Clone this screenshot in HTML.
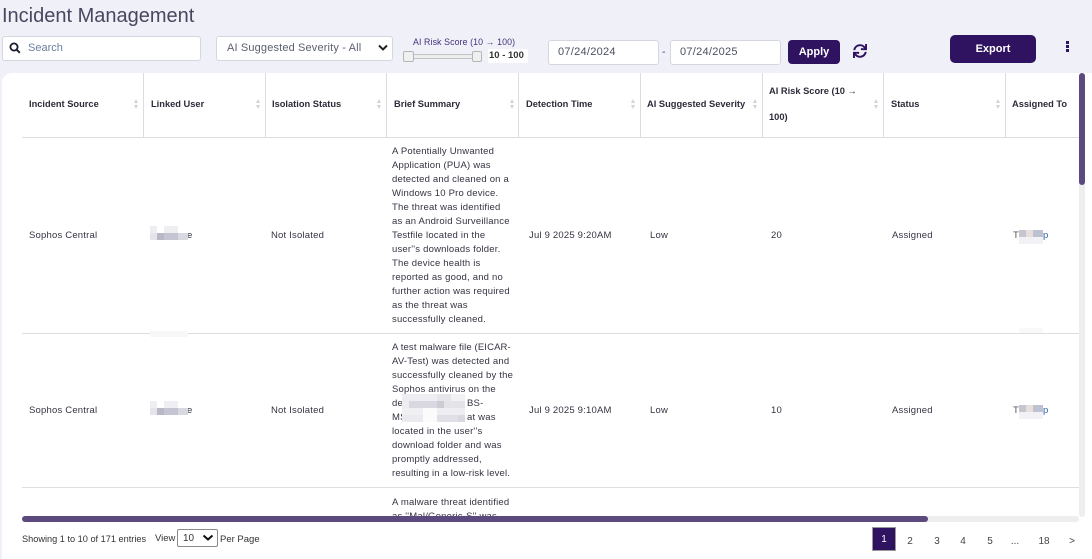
<!DOCTYPE html>
<html lang="en"><head><meta charset="utf-8"><title>Incident Management</title>
<style>
*{box-sizing:border-box}
html,body{margin:0;padding:0}
body{width:1092px;height:559px;overflow:hidden;position:relative;background:#f0f1f8;font-family:"Liberation Sans",sans-serif;color:#343442;font-size:9.5px}
.a{position:absolute;white-space:nowrap}
.t{position:absolute;white-space:nowrap;line-height:14px;letter-spacing:.2px;font-size:9.5px}
.box{position:absolute;background:#fff;border:1px solid #d5d7e0;border-radius:3px}
.btn{position:absolute;background:#2f1260;color:#fff;font-weight:bold;border-radius:5px;text-align:center}
.h{position:absolute;white-space:nowrap;font-weight:bold;font-size:9.3px;line-height:14px;color:#2c2c3a;top:97px}
.v{position:absolute;top:73px;height:64px;width:1px;background:#dcdcdf}
.r{position:absolute;left:22px;width:1057px;height:1px;background:#dedee0}
.up,.dn{position:absolute;width:0;height:0;border-left:2.5px solid transparent;border-right:2.5px solid transparent}
.up{border-bottom:4px solid #d3d3d6}.dn{border-top:4px solid #d3d3d6}
.p{position:absolute}
.pg{position:absolute;top:535px;font-size:10px;line-height:14px;color:#444;width:20px;text-align:center}
</style></head><body>
<div class="a" style="left:2px;top:4px;font-size:20px;line-height:24px;color:#4a4660">Incident Management</div>

<div class="box" style="left:2px;top:36px;width:199px;height:25px"></div>
<svg class="p" style="left:9px;top:42px" width="12" height="12" viewBox="0 0 12 12"><circle cx="5" cy="5" r="3.6" fill="none" stroke="#1c1c2c" stroke-width="1.8"/><path d="M7.8 7.8L10.8 10.8" stroke="#1c1c2c" stroke-width="2"/></svg>
<div class="a" style="left:28px;top:41px;font-size:11px;line-height:14px;color:#6a7fa0">Search</div>

<div class="box" style="left:216px;top:36px;width:177px;height:25px"></div>
<div class="a" style="left:227px;top:41px;font-size:11px;line-height:14px;color:#5c6070;letter-spacing:.15px">AI Suggested Severity - All</div>
<svg class="p" style="left:378px;top:44px" width="10" height="8" viewBox="0 0 10 8"><path d="M1 1.5L5 5.5L9 1.5" fill="none" stroke="#222" stroke-width="2"/></svg>

<div class="a" style="left:413px;top:37px;font-size:8.8px;line-height:11px;color:#44307c;letter-spacing:.1px">AI Risk Score (10 → 100)</div>
<div class="p" style="left:408px;top:54px;width:70px;height:5px;background:#eceded;border:1px solid #c4c4c4"></div>
<div class="p" style="left:403px;top:51px;width:11px;height:11px;background:#f0f0f0;border:1px solid #b5b5b5;border-radius:2px"></div>
<div class="p" style="left:472px;top:51px;width:10px;height:11px;background:#f0f0f0;border:1px solid #b5b5b5;border-radius:2px"></div>
<div class="a" style="left:488px;top:49px;width:40px;height:14px;background:#fff;padding-left:1px;font-weight:bold;font-size:9.5px;line-height:14px;color:#333">10 - 100</div>

<div class="box" style="left:548px;top:40px;width:111px;height:25px"></div>
<div class="a" style="left:558px;top:45px;font-size:11px;line-height:14px;color:#4c4f60;letter-spacing:.27px">07/24/2024</div>
<div class="a" style="left:662px;top:45px;font-size:10.5px;line-height:14px;color:#44307c">-</div>
<div class="box" style="left:670px;top:40px;width:111px;height:25px"></div>
<div class="a" style="left:680px;top:45px;font-size:11px;line-height:14px;color:#4c4f60;letter-spacing:.27px">07/24/2025</div>
<div class="btn" style="left:788px;top:40px;width:52px;height:24px;font-size:11px;line-height:25px;border-radius:4px">Apply</div>
<svg class="p" style="left:853px;top:44px" width="14" height="14" viewBox="0 0 512 512"><path fill="#2f1260" d="M440.65 12.57l4 82.77A247.16 247.16 0 0 0 255.83 8C134.73 8 33.91 94.92 12.29 209.82A12 12 0 0 0 24.09 224h49.05a12 12 0 0 0 11.67-9.26 175.91 175.91 0 0 1 317-56.94l-101.46-4.86a12 12 0 0 0-12.57 12v47.41a12 12 0 0 0 12 12H500a12 12 0 0 0 12-12V12a12 12 0 0 0-12-12h-47.37a12 12 0 0 0-11.98 12.57zM255.83 432a175.61 175.61 0 0 1-146-77.8l101.8 4.87a12 12 0 0 0 12.57-12v-47.4a12 12 0 0 0-12-12H12a12 12 0 0 0-12 12V500a12 12 0 0 0 12 12h47.35a12 12 0 0 0 12-12.6l-4.15-82.57A247.17 247.17 0 0 0 255.83 504c121.11 0 221.93-86.92 243.55-201.82a12 12 0 0 0-11.8-14.18h-49.05a12 12 0 0 0-11.67 9.26A175.86 175.86 0 0 1 255.83 432z"/></svg>
<div class="btn" style="left:950px;top:35px;width:86px;height:28px;font-size:11px;line-height:29px">Export</div>
<div class="p" style="left:1066px;top:41px;width:3px;height:3px;background:#2f1260;box-shadow:0 4px 0 #2f1260,0 8px 0 #2f1260"></div>

<div class="p" style="left:2px;top:73px;width:1090px;height:486px;background:#fff;border-top-left-radius:10px"></div>

<div class="v" style="left:143px"></div><div class="v" style="left:265px"></div><div class="v" style="left:386px"></div><div class="v" style="left:518px"></div><div class="v" style="left:640px"></div><div class="v" style="left:762px"></div><div class="v" style="left:883px"></div><div class="v" style="left:1005px"></div>
<div class="r" style="top:137px"></div><div class="r" style="top:333px"></div><div class="r" style="top:487px"></div>

<div class="h" style="left:29px">Incident Source</div>
<div class="h" style="left:151px">Linked User</div>
<div class="h" style="left:272px">Isolation Status</div>
<div class="h" style="left:394px">Brief Summary</div>
<div class="h" style="left:526px">Detection Time</div>
<div class="h" style="left:647px">AI Suggested Severity</div>
<div class="h" style="left:769px;top:84px">AI Risk Score (10 →</div>
<div class="h" style="left:769px;top:110px">100)</div>
<div class="h" style="left:891px">Status</div>
<div class="h" style="left:1012px">Assigned To</div>

<div class="up" style="left:134px;top:99px"></div><div class="dn" style="left:134px;top:105px"></div>
<div class="up" style="left:256px;top:99px"></div><div class="dn" style="left:256px;top:105px"></div>
<div class="up" style="left:377px;top:99px"></div><div class="dn" style="left:377px;top:105px"></div>
<div class="up" style="left:510px;top:99px"></div><div class="dn" style="left:510px;top:105px"></div>
<div class="up" style="left:631px;top:99px"></div><div class="dn" style="left:631px;top:105px"></div>
<div class="up" style="left:753px;top:99px"></div><div class="dn" style="left:753px;top:105px"></div>
<div class="up" style="left:874px;top:99px"></div><div class="dn" style="left:874px;top:105px"></div>
<div class="up" style="left:996px;top:99px"></div><div class="dn" style="left:996px;top:105px"></div>

<div class="t" style="left:29px;top:229px">Sophos Central</div>
<div class="t" style="left:271px;top:229px">Not Isolated</div>
<div class="t" style="left:529px;top:229px">Jul 9 2025 9:20AM</div>
<div class="t" style="left:650px;top:229px">Low</div>
<div class="t" style="left:771px;top:229px">20</div>
<div class="t" style="left:892px;top:229px">Assigned</div>
<div class="t" style="left:1013px;top:229px;color:#555">T</div>
<div class="t" style="left:1043px;top:229px;color:#2f5f9f">p</div>
<div class="t" style="left:187px;top:229px">e</div>

<div class="t" style="left:392px;top:145px">A Potentially Unwanted</div>
<div class="t" style="left:392px;top:159px">Application (PUA) was</div>
<div class="t" style="left:392px;top:173px">detected and cleaned on a</div>
<div class="t" style="left:392px;top:187px">Windows 10 Pro device.</div>
<div class="t" style="left:392px;top:201px">The threat was identified</div>
<div class="t" style="left:392px;top:215px">as an Android Surveillance</div>
<div class="t" style="left:392px;top:229px">Testfile located in the</div>
<div class="t" style="left:392px;top:243px">user''s downloads folder.</div>
<div class="t" style="left:392px;top:257px">The device health is</div>
<div class="t" style="left:392px;top:271px">reported as good, and no</div>
<div class="t" style="left:392px;top:285px">further action was required</div>
<div class="t" style="left:392px;top:299px">as the threat was</div>
<div class="t" style="left:392px;top:313px">successfully cleaned.</div>

<div class="t" style="left:29px;top:404px">Sophos Central</div>
<div class="t" style="left:271px;top:404px">Not Isolated</div>
<div class="t" style="left:529px;top:404px">Jul 9 2025 9:10AM</div>
<div class="t" style="left:650px;top:404px">Low</div>
<div class="t" style="left:771px;top:404px">10</div>
<div class="t" style="left:892px;top:404px">Assigned</div>
<div class="t" style="left:1013px;top:404px;color:#555">T</div>
<div class="t" style="left:1043px;top:404px;color:#2f5f9f">p</div>
<div class="t" style="left:187px;top:404px">e</div>

<div class="t" style="left:392px;top:341px;letter-spacing:.14px">A test malware file (EICAR-</div>
<div class="t" style="left:392px;top:355px">AV-Test) was detected and</div>
<div class="t" style="left:392px;top:369px">successfully cleaned by the</div>
<div class="t" style="left:392px;top:383px">Sophos antivirus on the</div>
<div class="t" style="left:392px;top:397px">de</div>
<div class="t" style="left:467px;top:397px">BS-</div>
<div class="t" style="left:392px;top:411px">MS</div>
<div class="t" style="left:467px;top:411px">at was</div>
<div class="t" style="left:392px;top:425px">located in the user''s</div>
<div class="t" style="left:392px;top:439px">download folder and was</div>
<div class="t" style="left:392px;top:453px">promptly addressed,</div>
<div class="t" style="left:392px;top:467px;letter-spacing:.15px">resulting in a low-risk level.</div>

<div class="t" style="left:392px;top:496px">A malware threat identified</div>
<div class="p" style="left:392px;top:510px;width:130px;height:6px;overflow:hidden"><div class="t" style="left:0;top:0">as ''Mal/Generic-S'' was</div></div>

<!-- redaction blocks -->
<div class="p" style="left:150px;top:226px;width:7px;height:7px;background:#eeeef2"></div>
<div class="p" style="left:164px;top:226px;width:14px;height:7px;background:#efeff3"></div>
<div class="p" style="left:150px;top:233px;width:38px;height:7px;background:linear-gradient(90deg,#e4e4ea 0 7px,#b9b8c8 7px 14px,#c4c4d2 14px 28px,#d8d8e0 28px)"></div>
<div class="p" style="left:150px;top:331px;width:38px;height:6px;background:#f8f8f8"></div>
<div class="p" style="left:150px;top:401px;width:7px;height:7px;background:#eeeef2"></div>
<div class="p" style="left:164px;top:401px;width:14px;height:7px;background:#efeff3"></div>
<div class="p" style="left:150px;top:408px;width:38px;height:7px;background:linear-gradient(90deg,#e4e4ea 0 7px,#b9b8c8 7px 14px,#c4c4d2 14px 28px,#d8d8e0 28px)"></div>
<div class="p" style="left:402px;top:394px;width:63px;height:7px;background:linear-gradient(90deg,#eeeef2 0 35px,#e6e6ea 35px 49px,#f2f2f4 49px)"></div>
<div class="p" style="left:402px;top:401px;width:63px;height:7px;background:linear-gradient(90deg,#eeeef2 0 7px,#d9d8e0 7px 35px,#cdcbd4 35px 42px,#e4e4e8 42px)"></div>
<div class="p" style="left:402px;top:408px;width:63px;height:7px;background:linear-gradient(90deg,#f0f0f3 0 21px,#fbfbfb 21px 35px,#eeeef2 35px)"></div>
<div class="p" style="left:402px;top:415px;width:63px;height:7px;background:linear-gradient(90deg,#ebebef 0 21px,#fbfbfb 21px 35px,#e0e0e6 35px 56px,#d8d8e0 56px)"></div>
<div class="p" style="left:1019px;top:230px;width:24px;height:7px;background:linear-gradient(90deg,#c5c6d0 0 7px,#e8dfdc 7px 14px,#bcc2d2 14px)"></div>
<div class="p" style="left:1019px;top:237px;width:24px;height:7px;background:#f2f2f6"></div>
<div class="p" style="left:1019px;top:328px;width:24px;height:5px;background:#f9f9f9"></div>
<div class="p" style="left:1019px;top:405px;width:24px;height:7px;background:linear-gradient(90deg,#c5c6d0 0 7px,#e8dfdc 7px 14px,#bcc2d2 14px)"></div>
<div class="p" style="left:1019px;top:412px;width:24px;height:7px;background:#f2f2f6"></div>

<!-- scrollbars -->
<div class="p" style="left:1079px;top:73px;width:6px;height:444px;background:#eeeeee;border-radius:3px"></div>
<div class="p" style="left:1079px;top:73px;width:6px;height:112px;background:#5c4a7e;border-radius:3px"></div>
<div class="p" style="left:22px;top:516px;width:1057px;height:6px;background:#eeeeee;border-radius:3px"></div>
<div class="p" style="left:22px;top:516px;width:906px;height:6px;background:#5c4a7e;border-radius:3px"></div>

<!-- footer -->
<div class="a" style="left:22px;top:532px;font-size:9.2px;line-height:14px;color:#333">Showing 1 to 10 of 171 entries</div>
<div class="a" style="left:155px;top:532px;font-size:9.5px;line-height:14px;color:#333">View</div>
<div class="p" style="left:177px;top:529px;width:41px;height:18px;background:#fff;border:1px solid #8a8a8a;border-radius:2px"></div>
<div class="a" style="left:183px;top:532px;font-size:10px;line-height:14px;color:#333">10</div>
<svg class="p" style="left:202px;top:534px" width="12" height="8" viewBox="0 0 12 8"><path d="M1.5 1.5L6 5.5L10.5 1.5" fill="none" stroke="#111" stroke-width="2"/></svg>
<div class="a" style="left:220px;top:533px;font-size:9.5px;line-height:14px;color:#333">Per Page</div>

<div class="p" style="left:872px;top:527px;width:24px;height:24px;background:#2f1260;border:1px solid #999;color:#fff;text-align:center;font-size:10px;line-height:24px">1</div>
<div class="pg" style="left:900px">2</div>
<div class="pg" style="left:927px">3</div>
<div class="pg" style="left:953px">4</div>
<div class="pg" style="left:980px">5</div>
<div class="pg" style="left:1005px">...</div>
<div class="pg" style="left:1034px">18</div>
<div class="pg" style="left:1062px">&gt;</div>
</body></html>
